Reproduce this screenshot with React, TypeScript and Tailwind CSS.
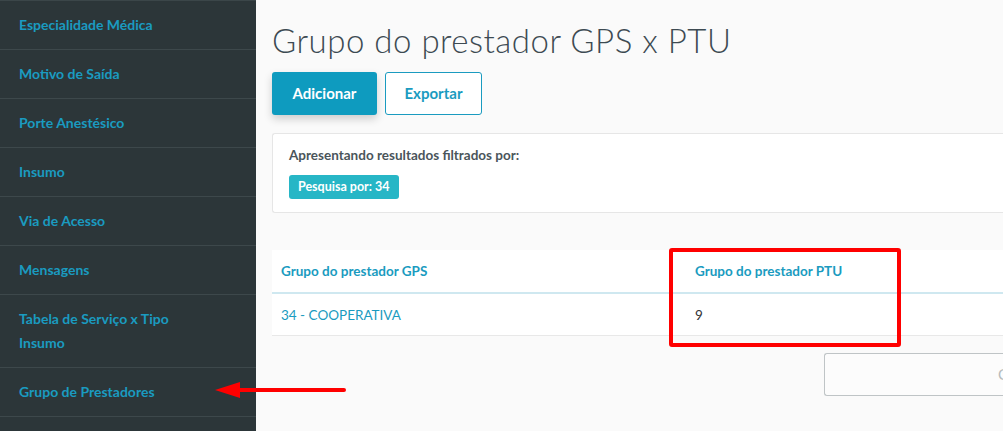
import React from "react";

const menu = [
  "Especialidade Médica",
  "Motivo de Saída",
  "Porte Anestésico",
  "Insumo",
  "Via de Acesso",
  "Mensagens",
  "Tabela de Serviço x Tipo Insumo",
  "Grupo de Prestadores",
];

export default function App() {
  return (
    <div
      className="relative flex h-[431px] w-[1003px] overflow-hidden bg-[#fafafa]"
      style={{ fontFamily: "Lato, 'Open Sans', sans-serif" }}
    >
      {/* sidebar */}
      <aside className="w-[256px] shrink-0 bg-[#2c3639] border-t border-[#3b4649]">
        {menu.map((item) => (
          <div
            key={item}
            className="border-b border-[#3d484b] py-[12px] pl-[19px] pr-[60px] text-[14px] font-bold leading-[24px] text-[#1a9bc0]"
          >
            {item}
          </div>
        ))}
      </aside>

      {/* main */}
      <main className="relative flex-1 pl-[16px] pt-[19px]">
        <h1 className="text-[33px] font-light leading-[42px] text-[#3d4a52] tracking-[0.5px]">
          Grupo do prestador GPS x PTU
        </h1>

        <div className="mt-[11px] flex gap-[8px]">
          <button className="h-[43px] w-[105px] rounded-[3px] bg-[#0e9bbf] text-[15px] font-bold text-white shadow-[0_4px_8px_rgba(0,0,0,0.18)]">
            Adicionar
          </button>
          <button className="h-[43px] w-[97px] rounded-[3px] border border-[#1a9bc0] bg-white text-[15px] font-bold text-[#1a9bc0]">
            Exportar
          </button>
        </div>

        <div className="mt-[18px] h-[80px] rounded-l-[3px] border border-r-0 border-[#e6e6e6] bg-white pl-[16px] pt-[11px]">
          <p className="text-[13.5px] font-bold text-[#4a555b]">
            Apresentando resultados filtrados por:
          </p>
          <span className="mt-[10px] inline-block rounded-[3px] bg-[#27b6c6] px-[9px] py-[4px] text-[12.5px] font-bold leading-[16px] text-white">
            Pesquisa por: 34
          </span>
        </div>

        <div className="mt-[37px] bg-white">
          <div className="grid h-[44px] grid-cols-[414px_1fr] items-center border-b-2 border-[#cfe8f0]">
            <div className="pl-[9px] text-[13.5px] font-bold text-[#1a9bc0]">
              Grupo do prestador GPS
            </div>
            <div className="pl-[9px] text-[13.5px] font-bold text-[#1a9bc0]">
              Grupo do prestador PTU
            </div>
          </div>
          <div className="grid h-[42px] grid-cols-[414px_1fr] items-center border-b border-[#e8e8e8] pt-[2px]">
            <div className="pl-[9px] text-[13.5px] text-[#1a9bc0]">34 - COOPERATIVA</div>
            <div className="pl-[9px] text-[13.5px] text-[#333]">9</div>
          </div>
        </div>

        <div className="mt-[17px] ml-[552px] flex h-[43px] items-center justify-end rounded-l-[3px] border border-r-0 border-[#bfc4c6] bg-[#fcfcfc]">
          <span className="mr-[-5px] text-[15px] text-[#b7bcbe]">C</span>
        </div>

        {/* red highlight box */}
        <div className="absolute left-[413px] top-[248px] h-[99px] w-[232px] rounded-[3px] border-[4px] border-[#ff0000]" />
      </main>

      {/* red arrow */}
      <svg
        className="absolute left-[210px] top-[380px]"
        width="140"
        height="22"
        viewBox="0 0 140 22"
      >
        <line x1="28" y1="10" x2="134" y2="10" stroke="#ff0000" strokeWidth="4" strokeLinecap="round" />
        <polygon points="5,10 30,2 30,18" fill="#ff0000" />
      </svg>
    </div>
  );
}
